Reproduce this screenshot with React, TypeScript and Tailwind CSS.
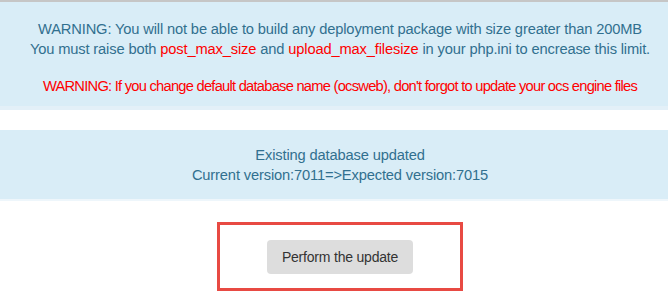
export default function App() {
  return (
    <div className="min-h-[306px] bg-white pl-3 font-['Liberation_Sans',Arial,sans-serif] text-[14.7px] leading-5 tracking-[-0.15px]">
      <div className="-ml-3 h-[2px] bg-[#c6c6c6]" />
      <div className="-ml-3 whitespace-nowrap border-b-4 border-[#e3f0f8] bg-[#d9edf7] pl-3 pt-[17px] pb-[10px] text-center text-[#31708f]">
        <div>WARNING: You will not be able to build any deployment package with size greater than 200MB</div>
        <div>
          You must raise both <span className="text-[#ff0000]">post_max_size</span> and{' '}
          <span className="text-[#ff0000]">upload_max_filesize</span> in your php.ini to encrease this limit.
        </div>
        <div className="mt-[17px] tracking-[-0.75px] text-[#ff0000]">
          WARNING: If you change default database name (ocsweb), don't forgot to update your ocs engine files
        </div>
      </div>
      <div className="h-5" />
      <div className="-ml-3 border-b-2 border-[#eef6fb] bg-[#d9edf7] pl-3 pt-[15px] pb-[14px] text-center text-[#31708f]">
        <div>Existing database updated</div>
        <div>Current version:7011=&gt;Expected version:7015</div>
      </div>
      <div className="flex justify-center pt-[21px]">
        <div className="flex h-[69px] w-[246px] items-center justify-center border-[3px] border-[#e84a43]">
          <button className="h-[34px] w-[146px] rounded bg-[#dddddd] text-[14px] tracking-[-0.2px] text-[#333333]">
            Perform the update
          </button>
        </div>
      </div>
    </div>
  );
}
